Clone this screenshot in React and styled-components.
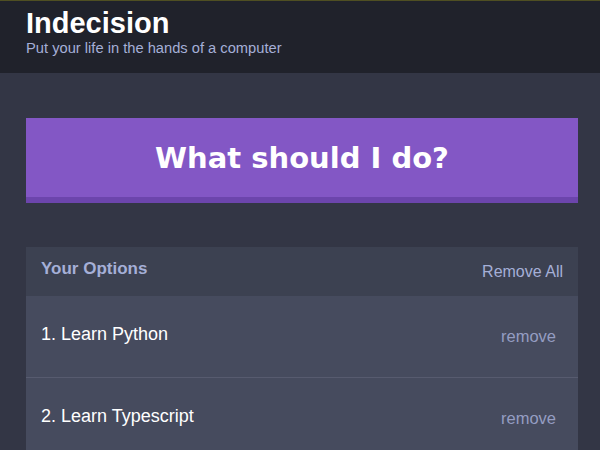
import React from "react";
import styled, { createGlobalStyle } from "styled-components";

const Global = createGlobalStyle`
  html, body { margin: 0; padding: 0; }
  body {
    background: #333645;
    font-family: "Liberation Sans", Arial, sans-serif;
    color: #ffffff;
  }
  * { box-sizing: border-box; }
`;

const Page = styled.div`
  min-height: 450px;
  background: #333645;
`;

const Header = styled.header`
  background: #20222b;
  border-top: 1px solid #4f4f22;
  padding: 5px 22px 16px 26px;
`;

const Title = styled.h1`
  margin: 0;
  font-size: 29px;
  line-height: 34px;
  font-weight: 700;
  color: #ffffff;
`;

const Subtitle = styled.h2`
  margin: 0;
  font-size: 14.7px;
  line-height: 17px;
  font-weight: 400;
  color: #a5afd7;
`;

const Container = styled.main`
  padding: 45px 22px 0 26px;
`;

const BigButton = styled.button`
  display: flex;
  align-items: center;
  justify-content: center;
  width: 100%;
  height: 85px;
  margin: 0 0 44px;
  padding: 0;
  border: none;
  border-bottom: 6px solid #6c45ac;
  background: #8357c5;
  color: #ffffff;
  font-family: "DejaVu Sans", sans-serif;
  font-weight: 700;
  font-size: 29px;
  cursor: pointer;
`;

const Widget = styled.section`
  background: #464b5e;
`;

const WidgetHeader = styled.div`
  display: flex;
  align-items: center;
  justify-content: space-between;
  height: 49px;
  padding: 0 15px 0 15px;
  background: #3c4151;
`;

const WidgetTitle = styled.h3`
  margin: 0 0 6px;
  font-size: 17px;
  font-weight: 700;
  color: #a5afd7;
`;

const LinkButton = styled.button`
  background: none;
  border: none;
  padding: 0;
  font-family: "Liberation Sans", Arial, sans-serif;
  font-size: ${(p) => p.$size || 16}px;
  color: ${(p) => p.$color || "#a5afd7"};
  cursor: pointer;
`;

const Option = styled.div`
  display: flex;
  align-items: center;
  justify-content: space-between;
  height: 82px;
  padding: 0 22px 1px 15px;
  border-bottom: 1px solid #575b6f;
`;

const OptionText = styled.p`
  margin: 0 0 4px;
  font-size: 18px;
  color: #ffffff;
`;

const options = ["Learn Python", "Learn Typescript"];

export default function App() {
  return (
    <Page>
      <Global />
      <Header>
        <Title>Indecision</Title>
        <Subtitle>Put your life in the hands of a computer</Subtitle>
      </Header>
      <Container>
        <BigButton>What should I do?</BigButton>
        <Widget>
          <WidgetHeader>
            <WidgetTitle>Your Options</WidgetTitle>
            <LinkButton>Remove All</LinkButton>
          </WidgetHeader>
          {options.map((o, i) => (
            <Option key={o}>
              <OptionText>
                {i + 1}. {o}
              </OptionText>
              <LinkButton $size={16.5} $color="#959dc2">
                remove
              </LinkButton>
            </Option>
          ))}
        </Widget>
      </Container>
    </Page>
  );
}
